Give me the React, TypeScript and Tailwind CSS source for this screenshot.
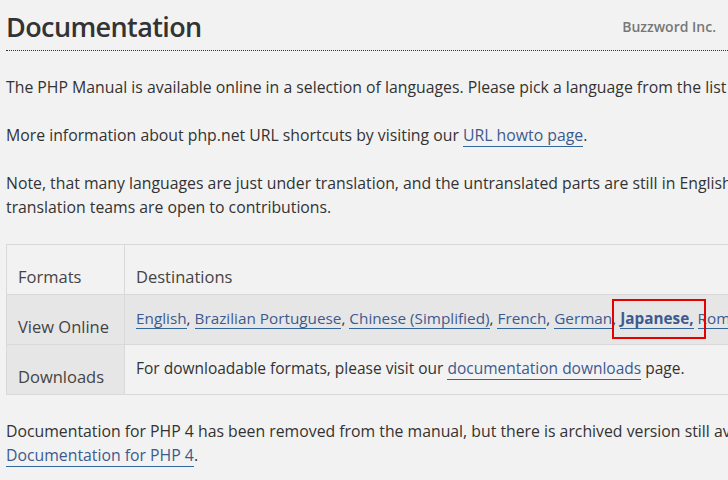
import React from "react";

const L = ({ children, bold }: { children: React.ReactNode; bold?: boolean }) => (
  <a
    href="#"
    className={`text-[#3d5a8f] border-b border-[#336699] no-underline ${bold ? "font-bold" : ""}`}
  >
    {children}
  </a>
);

export default function App() {
  return (
    <div
      className="w-[728px] h-[480px] overflow-hidden bg-[#f2f2f2] text-[#333] relative"
      style={{ fontFamily: '"Open Sans", "Noto Sans", sans-serif' }}
    >
      <div className="pl-[6px] w-[800px]">
        <div className="flex items-end justify-between pt-[3px] h-[51px] border-b border-dotted border-[#333] w-[800px]">
          <h1 className="text-[27px] font-semibold leading-[40px] mb-[3px] text-[#333] tracking-[-0.6px]">Documentation</h1>
          <span className="text-[14px] font-semibold text-[#777] mb-[13px] mr-[90px]">Buzzword Inc.</span>
        </div>
        <div className="text-[15.8px] leading-[24px] whitespace-nowrap">
          <p className="mt-[24px]">
            The PHP Manual is available online in a selection of languages. Please pick a language from the list below.
          </p>
          <p className="mt-[24px]">
            More information about php.net URL shortcuts by visiting our <L>URL howto page</L>.
          </p>
          <p className="mt-[24px]">
            Note, that many languages are just under translation, and the untranslated parts are still in English. Also some
            <br />
            translation teams are open to contributions.
          </p>
          <table className="mt-[25px] border-collapse">
            <tbody>
              <tr className="h-[50px]">
                <th className="border border-[#d9d9d9] w-[118px] min-w-[118px] text-left font-normal align-bottom px-[11px] pb-[5px] text-[16.5px] text-[#444]">
                  Formats
                </th>
                <td className="border border-[#d9d9d9] text-left align-bottom px-[11px] pb-[5px] text-[16.5px] text-[#444] w-[640px]">
                  Destinations
                </td>
              </tr>
              <tr className="h-[50px] bg-[#e6e6e6]">
                <th className="border border-[#d9d9d9] text-left font-normal align-bottom px-[11px] pb-[5px] text-[16.5px] text-[#444]">
                  View Online
                </th>
                <td className="border border-[#d9d9d9] align-middle px-[11px] pb-[4px] text-[15.3px]">
                  <L>English</L>, <L>Brazilian Portuguese</L>, <L>Chinese (Simplified)</L>, <L>French</L>, <L>German</L>,{" "}
                  <L bold>Japanese,</L> <L>Romanian</L>, <L>Russian</L>
                </td>
              </tr>
              <tr className="h-[50px]">
                <th className="border border-[#d9d9d9] bg-[#e6e6e6] text-left font-normal align-bottom px-[11px] pb-[5px] text-[16.5px] text-[#444]">
                  Downloads
                </th>
                <td className="border border-[#d9d9d9] align-middle px-[11px] pb-[4px] text-[15.5px]">
                  For downloadable formats, please visit our <L>documentation downloads</L> page.
                </td>
              </tr>
            </tbody>
          </table>
          <p className="mt-[24px]">
            Documentation for PHP 4 has been removed from the manual, but there is archived version still available. For information, see the
            <br />
            <L>Documentation for PHP 4</L>.
          </p>
        </div>
      </div>
      <div className="absolute left-[612px] top-[299px] w-[94px] h-[40px] border-2 border-[#e60000]" />
    </div>
  );
}
